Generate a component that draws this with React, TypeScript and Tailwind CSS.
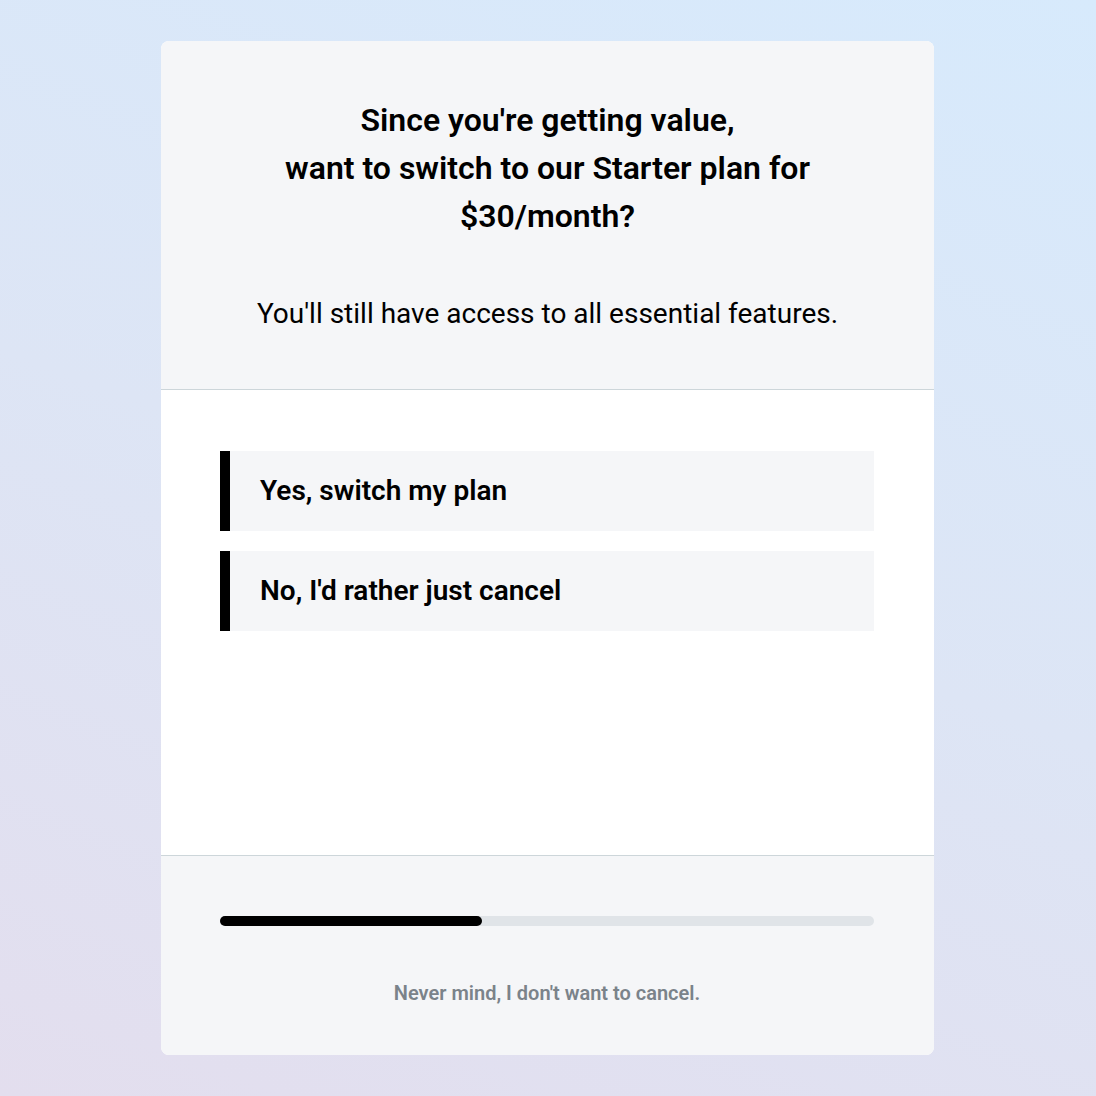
export default function App() {
  return (
    <div
      className="min-h-screen w-full flex pl-[161px] pt-[41px] pb-[41px] bg-[linear-gradient(20deg,#e3deee_0%,#dde5f5_50%,#d7eafc_100%)]"
      style={{ fontFamily: "Roboto, 'Liberation Sans', sans-serif" }}
    >
      <div className="w-[773px] h-[1014px] flex flex-col rounded-lg overflow-hidden bg-white">
        <div className="bg-[#f5f6f8] px-[40px] pt-[55px] pb-[57px] border-b border-[#cdd6da] text-center">
          <h1 className="text-[32px] leading-[48px] font-semibold text-black">
            Since you're getting value,
            <br />
            want to switch to our Starter plan for
            <br />
            $30/month?
          </h1>
          <p className="mt-[56px] text-[28px] leading-[36px] text-black">
            You'll still have access to all essential features.
          </p>
        </div>
        <div className="flex-1 pl-[59px] pr-[60px] pt-[61px] flex flex-col gap-5">
          <button className="h-20 w-full flex items-center bg-[#f5f6f8] border-l-[10px] border-black pl-[30px] text-left text-[28px] font-semibold text-black">
            Yes, switch my plan
          </button>
          <button className="h-20 w-full flex items-center bg-[#f5f6f8] border-l-[10px] border-black pl-[30px] text-left text-[28px] font-semibold text-black">
            No, I'd rather just cancel
          </button>
        </div>
        <div className="h-[200px] bg-[#f5f6f8] border-t border-[#cdd6da] pl-[59px] pr-[60px] pt-[60px]">
          <div className="h-[10px] w-full rounded-full bg-[#e0e4e8]">
            <div className="h-full w-[40%] rounded-full bg-black" />
          </div>
          <p className="mt-[53px] text-center text-[20px] leading-7 font-semibold text-[#7b838a]">
            Never mind, I don't want to cancel.
          </p>
        </div>
      </div>
    </div>
  );
}
